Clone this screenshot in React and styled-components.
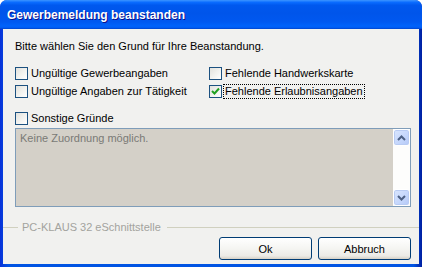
import React from "react";
import styled, { createGlobalStyle } from "styled-components";

const GlobalStyle = createGlobalStyle`
  html, body {
    margin: 0;
    padding: 0;
    background: #ffffff;
  }
  body {
    font-family: "Liberation Sans", Arial, sans-serif;
    font-size: 11px;
    color: #000;
  }
`;

const reasons = [
  { label: "Ungültige Gewerbeangaben", checked: false },
  { label: "Fehlende Handwerkskarte", checked: false },
  { label: "Ungültige Angaben zur Tätigkeit", checked: false },
  { label: "Fehlende Erlaubnisangaben", checked: true, focused: true },
];

const CheckMark = () => (
  <svg width="9" height="9" viewBox="0 0 9 9">
    <path d="M1 4 L3.5 6.5 L8 1.5" fill="none" stroke="#21a121" strokeWidth="2" />
  </svg>
);

const Chevron = ({ down }) => (
  <svg width="9" height="6" viewBox="0 0 9 6">
    <path
      d={down ? "M1 1 L4.5 4.5 L8 1" : "M1 5 L4.5 1.5 L8 5"}
      fill="none"
      stroke="#4d6185"
      strokeWidth="2"
    />
  </svg>
);

const CheckItem = ({ label, checked, focused }) => (
  <CheckRow>
    <Box>{checked && <CheckMark />}</Box>
    <Label $focused={focused}>{label}</Label>
  </CheckRow>
);

const App = () => {
  return (
    <>
      <GlobalStyle />
      <Window>
        <TitleBar>Gewerbemeldung beanstanden</TitleBar>
        <Body>
          <Intro>Bitte wählen Sie den Grund für Ihre Beanstandung.</Intro>
          <ReasonGrid>
            {reasons.map((r) => (
              <CheckItem key={r.label} {...r} />
            ))}
          </ReasonGrid>
          <OtherRow>
            <CheckItem label="Sonstige Gründe" />
          </OtherRow>
          <Memo>
            <MemoText>Keine Zuordnung möglich.</MemoText>
            <Scrollbar>
              <ArrowButton>
                <Chevron />
              </ArrowButton>
              <ArrowButton>
                <Chevron down />
              </ArrowButton>
            </Scrollbar>
          </Memo>
          <Separator>
            <Line $short />
            <SeparatorText>PC-KLAUS 32 eSchnittstelle</SeparatorText>
            <Line />
          </Separator>
          <ButtonRow>
            <Button>Ok</Button>
            <Button>Abbruch</Button>
          </ButtonRow>
        </Body>
      </Window>
    </>
  );
};

const Window = styled.div`
  width: 422px;
  height: 267px;
  display: flex;
  flex-direction: column;
  box-sizing: border-box;
  border-radius: 7px 7px 0 0;
  background: linear-gradient(to right, #0831d9 0%, #0054e3 2%, #0054e3 98%, #001ea0 100%);
  overflow: hidden;
`;

const TitleBar = styled.div`
  height: 29px;
  flex: none;
  box-sizing: border-box;
  padding: 1px 0 0 7px;
  display: flex;
  align-items: center;
  color: #ffffff;
  font-weight: bold;
  font-size: 12px;
  text-shadow: 1px 1px 0 #0f1089;
  background: linear-gradient(
    to bottom,
    #3d95ff 0%,
    #0a6cff 8%,
    #0058ee 18%,
    #0055ea 45%,
    #0058f0 75%,
    #0063fb 90%,
    #0059f0 96%,
    #0041c7 100%
  );
`;

const Body = styled.div`
  flex: 1;
  margin: 0 3px 3px 3px;
  background: #f1f1ef;
  display: flex;
  flex-direction: column;
  padding: 11px 8px 4px 12px;
  box-sizing: border-box;
`;

const Intro = styled.div`
  height: 13px;
  line-height: 13px;
`;

const ReasonGrid = styled.div`
  margin-top: 14px;
  display: grid;
  grid-template-columns: 194px 1fr;
  grid-auto-rows: 18px;
`;

const OtherRow = styled.div`
  margin-top: 9px;
  height: 16px;
`;

const CheckRow = styled.div`
  display: flex;
  align-items: flex-start;
  height: 13px;
`;

const Box = styled.span`
  width: 13px;
  height: 13px;
  box-sizing: border-box;
  border: 1px solid #1c5180;
  background: linear-gradient(135deg, #e2e2dd 0%, #f4f4f1 60%, #ffffff 100%);
  display: flex;
  align-items: center;
  justify-content: center;
  flex: none;
`;

const Label = styled.span`
  margin-left: 2px;
  padding: 0 1px;
  line-height: 13px;
  outline: ${(p) => (p.$focused ? "1px dotted #000" : "none")};
  outline-offset: 0;
`;

const Memo = styled.div`
  height: 79px;
  width: 396px;
  box-sizing: border-box;
  border: 1px solid #7f9db9;
  background: #d4d0c8;
  display: flex;
`;

const MemoText = styled.div`
  flex: 1;
  padding: 3px 4px;
  color: #7a7a76;
`;

const Scrollbar = styled.div`
  width: 17px;
  background: #fdfdfc;
  display: flex;
  flex-direction: column;
  justify-content: space-between;
`;

const ArrowButton = styled.div`
  width: 17px;
  height: 17px;
  box-sizing: border-box;
  border: 1px solid #ffffff;
  border-radius: 3px;
  background: linear-gradient(135deg, #dae6fe 0%, #c4d6fc 60%, #b4c8f6 100%);
  box-shadow: inset 0 0 0 1px #b8cbf3;
  display: flex;
  align-items: center;
  justify-content: center;
`;

const Separator = styled.div`
  margin: 13px -8px 0 -12px;
  height: 14px;
  display: flex;
  align-items: center;
`;

const Line = styled.div`
  height: 1px;
  background: #d0d0bf;
  flex: ${(p) => (p.$short ? "0 0 15px" : "1")};
`;

const SeparatorText = styled.span`
  padding: 0 6px 0 4px;
  color: #a3a39e;
  line-height: 14px;
`;

const ButtonRow = styled.div`
  margin-top: 3px;
  display: flex;
  justify-content: flex-end;
  gap: 6px;
`;

const Button = styled.div`
  width: 93px;
  height: 23px;
  box-sizing: border-box;
  border: 1px solid #003c74;
  border-radius: 3px;
  background: linear-gradient(to bottom, #ffffff 0%, #f5f5f2 50%, #ecebe6 85%, #d6d0c5 100%);
  display: flex;
  align-items: center;
  justify-content: center;
  font-size: 11px;
`;

export default App;
